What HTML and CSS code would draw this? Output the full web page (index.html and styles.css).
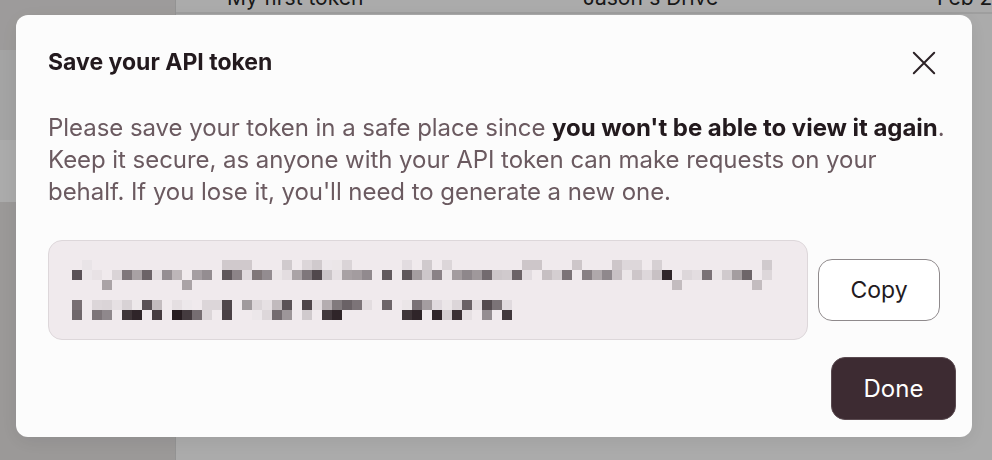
FILE: index.html
```html
<!DOCTYPE html>
<html lang="en">
<head>
<meta charset="utf-8">
<title>Save your API token</title>
<link rel="stylesheet" href="styles.css">
</head>
<body>
<div class="app">
  <aside class="sidebar">
    <div class="nav-top"></div>
    <div class="nav-item"></div>
    <div class="nav-item active"></div>
  </aside>
  <main class="main">
    <div class="table-row">
      <span class="cell name">My first token</span>
      <span class="cell drive">Jason's Drive</span>
      <span class="cell date">Feb 2</span>
    </div>
  </main>
</div>

<div class="overlay">
  <div class="modal" role="dialog" aria-labelledby="modal-title">
    <div class="modal-header">
      <h2 class="modal-title" id="modal-title">Save your API token</h2>
      <button class="close-btn" aria-label="Close">
        <svg width="24" height="24" viewBox="0 0 24 24" fill="none" stroke="#2c2226" stroke-width="2" stroke-linecap="round">
          <path d="M1.8 1.8 L22.2 22.2 M22.2 1.8 L1.8 22.2"/>
        </svg>
      </button>
    </div>
    <p class="modal-text">Please save your token in a safe place since <strong>you won't be able to view it again</strong>. Keep it secure, as anyone with your API token can make requests on your behalf. If you lose it, you'll need to generate a new one.</p>
    <div class="token-row">
      <div class="token-box">
        <svg class="token-blur" width="700" height="60" viewBox="0 0 700 60" shape-rendering="crispEdges" aria-label="Hidden token">
          <g>
            <rect x="10" y="0" width="10" height="10" fill="#e9e4e7"/>
            <rect x="150" y="0" width="30" height="10" fill="#d0c9cc"/>
            <rect x="210" y="0" width="10" height="10" fill="#d0cacd"/>
            <rect x="230" y="0" width="10" height="10" fill="#dcd6d9"/>
            <rect x="240" y="0" width="10" height="10" fill="#d0cacd"/>
            <rect x="250" y="0" width="10" height="10" fill="#ece7ea"/>
            <rect x="260" y="0" width="10" height="10" fill="#ebe6e8"/>
            <rect x="270" y="0" width="10" height="10" fill="#dad4d7"/>
            <rect x="330" y="0" width="10" height="10" fill="#e2dce0"/>
            <rect x="350" y="0" width="10" height="10" fill="#d0cacd"/>
            <rect x="370" y="0" width="10" height="10" fill="#dcd6d9"/>
            <rect x="450" y="0" width="20" height="10" fill="#cdc6c9"/>
            <rect x="500" y="0" width="10" height="10" fill="#cdc6c9"/>
            <rect x="540" y="0" width="10" height="10" fill="#cdc6c9"/>
            <rect x="550" y="0" width="20" height="10" fill="#ddd7da"/>
            <rect x="580" y="0" width="10" height="10" fill="#d6d0d3"/>
            <rect x="690" y="0" width="10" height="10" fill="#d0cacd"/>
          </g>
          <g>
            <rect x="0" y="10" width="10" height="10" fill="#5a5257"/>
            <rect x="10" y="10" width="10" height="10" fill="#ece7ea"/>
            <rect x="20" y="10" width="10" height="10" fill="#e8e2e5"/>
            <rect x="40" y="10" width="10" height="10" fill="#dad4d7"/>
            <rect x="50" y="10" width="10" height="10" fill="#7f777b"/>
            <rect x="60" y="10" width="10" height="10" fill="#a8a1a4"/>
            <rect x="70" y="10" width="10" height="10" fill="#6b6367"/>
            <rect x="80" y="10" width="10" height="10" fill="#e4dee1"/>
            <rect x="90" y="10" width="10" height="10" fill="#958e92"/>
            <rect x="100" y="10" width="10" height="10" fill="#bdb6b9"/>
            <rect x="120" y="10" width="10" height="10" fill="#a59ea2"/>
            <rect x="130" y="10" width="10" height="10" fill="#948d91"/>
            <rect x="150" y="10" width="10" height="10" fill="#5f575b"/>
            <rect x="160" y="10" width="10" height="10" fill="#8c8488"/>
            <rect x="170" y="10" width="10" height="10" fill="#e0dade"/>
            <rect x="180" y="10" width="10" height="10" fill="#807779"/>
            <rect x="190" y="10" width="10" height="10" fill="#938c90"/>
            <rect x="200" y="10" width="10" height="10" fill="#ebe6e8"/>
            <rect x="210" y="10" width="10" height="10" fill="#e3dde0"/>
            <rect x="220" y="10" width="10" height="10" fill="#aaa3a6"/>
            <rect x="230" y="10" width="10" height="10" fill="#7f777b"/>
            <rect x="240" y="10" width="10" height="10" fill="#51484c"/>
            <rect x="250" y="10" width="10" height="10" fill="#cbc5c8"/>
            <rect x="260" y="10" width="10" height="10" fill="#e6e0e3"/>
            <rect x="270" y="10" width="10" height="10" fill="#a8a1a4"/>
            <rect x="280" y="10" width="10" height="10" fill="#a39c9f"/>
            <rect x="290" y="10" width="10" height="10" fill="#918a8e"/>
            <rect x="310" y="10" width="10" height="10" fill="#625a5e"/>
            <rect x="330" y="10" width="10" height="10" fill="#5f575b"/>
            <rect x="340" y="10" width="10" height="10" fill="#a49da0"/>
            <rect x="350" y="10" width="10" height="10" fill="#cdc7ca"/>
            <rect x="360" y="10" width="10" height="10" fill="#8a8286"/>
            <rect x="370" y="10" width="10" height="10" fill="#ebe6e8"/>
            <rect x="380" y="10" width="10" height="10" fill="#a39c9f"/>
            <rect x="390" y="10" width="10" height="10" fill="#8e878b"/>
            <rect x="400" y="10" width="10" height="10" fill="#9f989b"/>
            <rect x="410" y="10" width="10" height="10" fill="#736b6f"/>
            <rect x="420" y="10" width="10" height="10" fill="#cdc7ca"/>
            <rect x="430" y="10" width="10" height="10" fill="#d0cacd"/>
            <rect x="440" y="10" width="10" height="10" fill="#6b6367"/>
            <rect x="450" y="10" width="10" height="10" fill="#e2dce0"/>
            <rect x="470" y="10" width="10" height="10" fill="#c6bfc2"/>
            <rect x="480" y="10" width="10" height="10" fill="#d4ced1"/>
            <rect x="490" y="10" width="10" height="10" fill="#7b7377"/>
            <rect x="510" y="10" width="10" height="10" fill="#888084"/>
            <rect x="520" y="10" width="10" height="10" fill="#afa8ab"/>
            <rect x="530" y="10" width="10" height="10" fill="#8f888c"/>
            <rect x="540" y="10" width="10" height="10" fill="#c8c1c4"/>
            <rect x="550" y="10" width="10" height="10" fill="#ebe6e8"/>
            <rect x="560" y="10" width="10" height="10" fill="#cdc6c9"/>
            <rect x="570" y="10" width="10" height="10" fill="#ddd7da"/>
            <rect x="580" y="10" width="10" height="10" fill="#c8c1c4"/>
            <rect x="590" y="10" width="10" height="10" fill="#2f2529"/>
            <rect x="610" y="10" width="10" height="10" fill="#ddd7da"/>
            <rect x="620" y="10" width="10" height="10" fill="#e3dde0"/>
            <rect x="630" y="10" width="10" height="10" fill="#7a7276"/>
            <rect x="640" y="10" width="10" height="10" fill="#ebe6e8"/>
            <rect x="650" y="10" width="10" height="10" fill="#d0cacd"/>
            <rect x="660" y="10" width="10" height="10" fill="#a49da0"/>
            <rect x="670" y="10" width="10" height="10" fill="#6d6569"/>
            <rect x="690" y="10" width="10" height="10" fill="#ddd7da"/>
          </g>
          <g>
            <rect x="30" y="20" width="10" height="10" fill="#aaa3a6"/>
            <rect x="110" y="20" width="10" height="10" fill="#aaa3a6"/>
            <rect x="600" y="20" width="10" height="10" fill="#c3bcbf"/>
            <rect x="680" y="20" width="10" height="10" fill="#c3bcbf"/>
          </g>
          <g>
            <rect x="0" y="40" width="10" height="10" fill="#786f73"/>
            <rect x="20" y="40" width="10" height="10" fill="#dcd6d9"/>
            <rect x="30" y="40" width="10" height="10" fill="#dad4d7"/>
            <rect x="40" y="40" width="10" height="10" fill="#e6e0e3"/>
            <rect x="50" y="40" width="10" height="10" fill="#d8d2d5"/>
            <rect x="60" y="40" width="10" height="10" fill="#ede8ea"/>
            <rect x="70" y="40" width="10" height="10" fill="#5a5256"/>
            <rect x="80" y="40" width="10" height="10" fill="#c3bcbf"/>
            <rect x="100" y="40" width="10" height="10" fill="#e5dfe2"/>
            <rect x="110" y="40" width="10" height="10" fill="#ede8eb"/>
            <rect x="130" y="40" width="20" height="10" fill="#dcd6d9"/>
            <rect x="150" y="40" width="10" height="10" fill="#4f474b"/>
            <rect x="170" y="40" width="10" height="10" fill="#a09a9d"/>
            <rect x="180" y="40" width="10" height="10" fill="#dcd6d9"/>
            <rect x="190" y="40" width="10" height="10" fill="#e6e0e3"/>
            <rect x="200" y="40" width="10" height="10" fill="#c1babd"/>
            <rect x="210" y="40" width="10" height="10" fill="#5a5256"/>
            <rect x="230" y="40" width="10" height="10" fill="#4e4549"/>
            <rect x="240" y="40" width="10" height="10" fill="#e3dde0"/>
            <rect x="250" y="40" width="10" height="10" fill="#b4adb0"/>
            <rect x="260" y="40" width="10" height="10" fill="#817a7d"/>
            <rect x="270" y="40" width="10" height="10" fill="#6a6266"/>
            <rect x="280" y="40" width="10" height="10" fill="#7c7478"/>
            <rect x="290" y="40" width="10" height="10" fill="#e3dde0"/>
            <rect x="310" y="40" width="10" height="10" fill="#6d6569"/>
            <rect x="330" y="40" width="10" height="10" fill="#ebe6e8"/>
            <rect x="340" y="40" width="10" height="10" fill="#7a7276"/>
            <rect x="350" y="40" width="10" height="10" fill="#a49da0"/>
            <rect x="360" y="40" width="10" height="10" fill="#e0dade"/>
            <rect x="370" y="40" width="10" height="10" fill="#ebe6e8"/>
            <rect x="380" y="40" width="10" height="10" fill="#dcd6d9"/>
            <rect x="390" y="40" width="10" height="10" fill="#6a6266"/>
            <rect x="400" y="40" width="10" height="10" fill="#e3dde0"/>
            <rect x="410" y="40" width="10" height="10" fill="#544b4f"/>
            <rect x="420" y="40" width="10" height="10" fill="#7b7377"/>
            <rect x="430" y="40" width="10" height="10" fill="#e0dade"/>
          </g>
          <g>
            <rect x="0" y="50" width="10" height="10" fill="#6f676b"/>
            <rect x="20" y="50" width="10" height="10" fill="#7d7579"/>
            <rect x="30" y="50" width="10" height="10" fill="#8f888c"/>
            <rect x="50" y="50" width="10" height="10" fill="#3f3639"/>
            <rect x="60" y="50" width="10" height="10" fill="#2f2529"/>
            <rect x="80" y="50" width="10" height="10" fill="#463c40"/>
            <rect x="100" y="50" width="10" height="10" fill="#261c20"/>
            <rect x="110" y="50" width="10" height="10" fill="#443b3f"/>
            <rect x="120" y="50" width="10" height="10" fill="#766e72"/>
            <rect x="130" y="50" width="10" height="10" fill="#dcd6d9"/>
            <rect x="150" y="50" width="10" height="10" fill="#4a4145"/>
            <rect x="180" y="50" width="10" height="10" fill="#ece7ea"/>
            <rect x="190" y="50" width="10" height="10" fill="#ddd7da"/>
            <rect x="200" y="50" width="10" height="10" fill="#736b6f"/>
            <rect x="210" y="50" width="10" height="10" fill="#9d9699"/>
            <rect x="230" y="50" width="10" height="10" fill="#d0cacd"/>
            <rect x="250" y="50" width="10" height="10" fill="#41383c"/>
            <rect x="260" y="50" width="10" height="10" fill="#2f2529"/>
            <rect x="330" y="50" width="10" height="10" fill="#3f3639"/>
            <rect x="340" y="50" width="10" height="10" fill="#2f2529"/>
            <rect x="360" y="50" width="10" height="10" fill="#30262a"/>
            <rect x="370" y="50" width="10" height="10" fill="#d4ced1"/>
            <rect x="380" y="50" width="10" height="10" fill="#3b3135"/>
            <rect x="390" y="50" width="10" height="10" fill="#e6e0e3"/>
            <rect x="410" y="50" width="10" height="10" fill="#958e92"/>
            <rect x="430" y="50" width="10" height="10" fill="#41383c"/>
          </g>
        </svg>
      </div>
      <button class="btn btn-outline">Copy</button>
    </div>
    <div class="modal-footer">
      <button class="btn btn-primary">Done</button>
    </div>
  </div>
</div>
</body>
</html>
```

FILE: styles.css
```css
* {
  box-sizing: border-box;
}

html,
body {
  margin: 0;
  height: 100%;
}

body {
  font-family: Inter, "Noto Sans", "Liberation Sans", sans-serif;
  background: #ffffff;
  color: #231a1e;
  overflow: hidden;
}

/* ---------- background page ---------- */
.app {
  display: flex;
  height: 100vh;
}

.sidebar {
  width: 176px;
  flex-shrink: 0;
  background: #e7e4e3;
  border-right: 1px solid #dcdcdc;
  display: flex;
  flex-direction: column;
}

.nav-top {
  height: 50px;
  background: #ebe8e7;
}

.nav-item {
  height: 90px;
  background: #f5f5f5;
}

.nav-item.active {
  height: 62px;
  background: #ffffff;
}

.main {
  flex: 1;
  min-width: 0;
  background: #ffffff;
  overflow: hidden;
}

.table-row {
  display: grid;
  grid-template-columns: 356px 354px 1fr;
  padding-left: 51px;
  margin-top: -14px;
  height: 28px;
  border-bottom: 2px solid #ececec;
  font-size: 21px;
  line-height: 24px;
  color: #262626;
  white-space: nowrap;
}

/* ---------- overlay + modal ---------- */
.overlay {
  position: fixed;
  inset: 0;
  background: rgba(0, 0, 0, 0.33);
  display: flex;
  align-items: flex-start;
  padding: 15px 0 0 16px;
}

.modal {
  width: 956px;
  background: #fcfcfc;
  border-radius: 12px;
  box-shadow: 0 4px 20px rgba(0, 0, 0, 0.08);
  display: flex;
  flex-direction: column;
}

.modal-header {
  display: flex;
  justify-content: space-between;
  align-items: flex-start;
  padding: 33px 36px 0 32px;
  height: 64px;
}

.modal-title {
  margin: 0;
  font-size: 23px;
  line-height: 28px;
  font-weight: 700;
  color: #231a1e;
}

.close-btn {
  margin-top: 3px;
  padding: 0;
  width: 24px;
  height: 24px;
  border: 0;
  background: transparent;
  display: flex;
}

.modal-text {
  margin: 33px 14px 0 32px;
  font-size: 24px;
  line-height: 32px;
  color: #6b5a60;
  letter-spacing: -0.05px;
}

.modal-text strong {
  font-weight: 700;
  color: #231a1e;
}

.token-row {
  display: flex;
  align-items: center;
  gap: 10px;
  margin: 32px 32px 0 32px;
}

.token-box {
  flex: 1;
  height: 100px;
  background: #f0eaed;
  border: 1.5px solid #ddd7da;
  border-radius: 14px;
  padding: 18.5px 22.5px;
}

.token-blur {
  display: block;
}

.btn {
  font-family: Inter, "Noto Sans", "Liberation Sans", sans-serif;
  border-radius: 14px;
  cursor: pointer;
  padding: 0;
}

.btn-outline {
  width: 122px;
  height: 62px;
  font-size: 23px;
  background: #ffffff;
  border: 1.5px solid #8f8a8c;
  color: #231a1e;
}

.modal-footer {
  display: flex;
  justify-content: flex-end;
  padding: 17px 16px 17px 16px;
}

.btn-primary {
  width: 125px;
  height: 63px;
  font-size: 24px;
  background: #3d2b32;
  border: 1.5px solid #5a4a50;
  color: #ffffff;
}
```
